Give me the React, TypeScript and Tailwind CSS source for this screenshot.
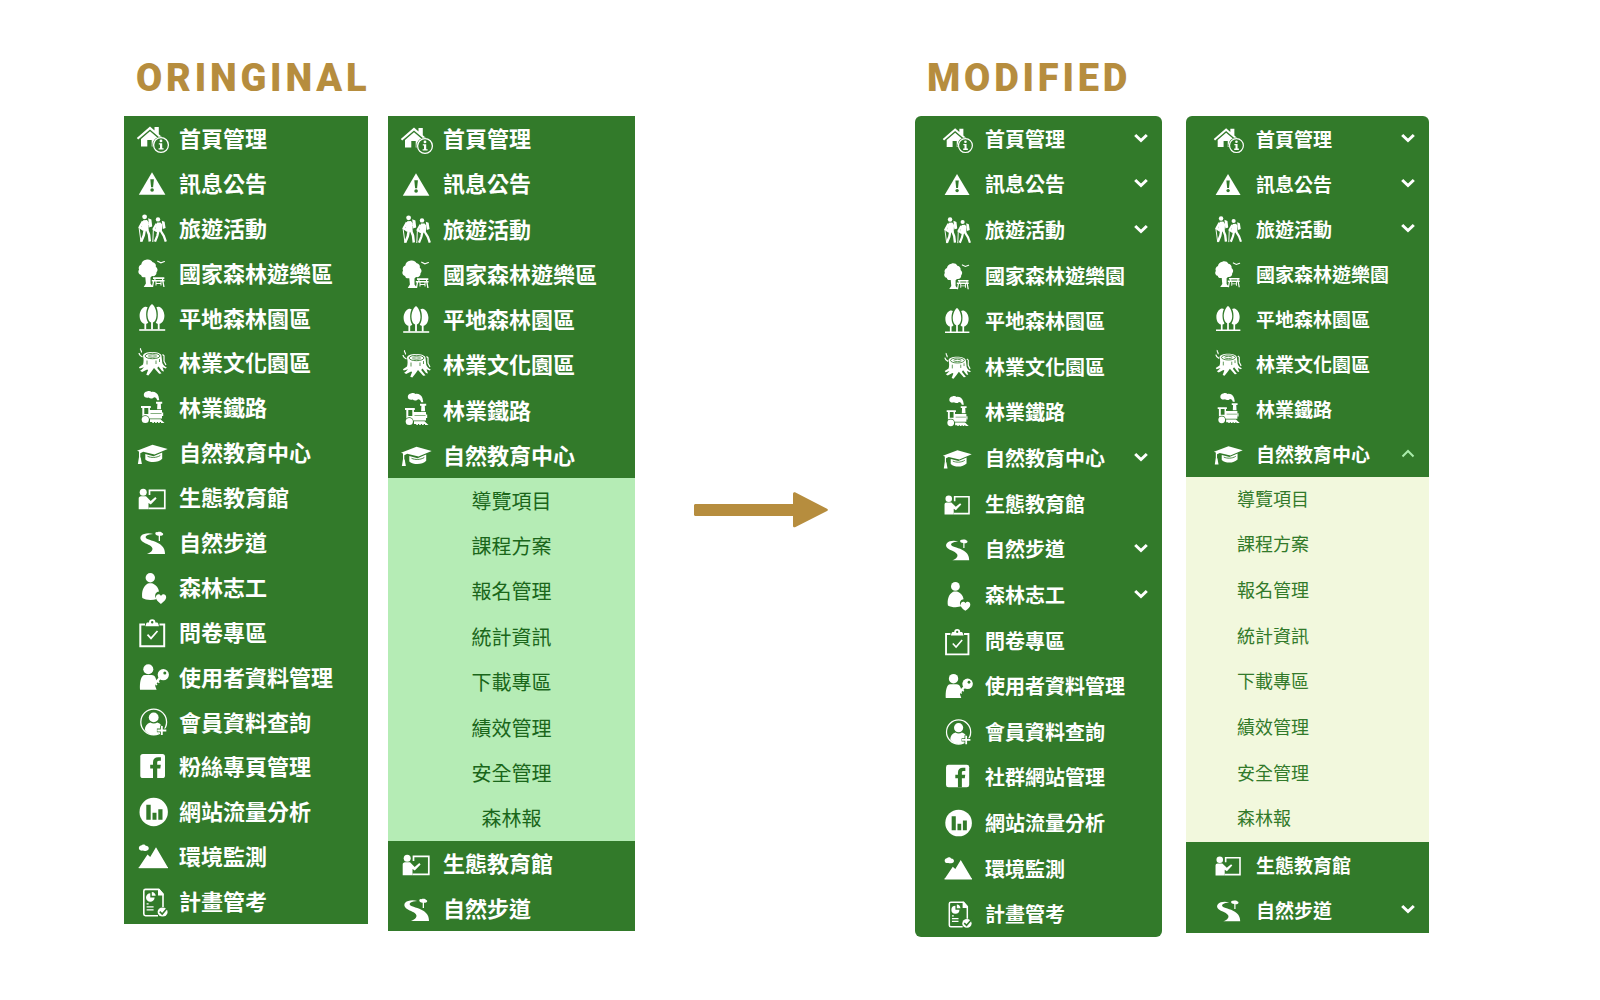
import type { ReactNode } from "react";

type IconName =
  | "home" | "alert" | "hikers" | "park" | "trees" | "stump" | "train" | "cap" | "teach"
  | "trail" | "volunteer" | "survey" | "userKey" | "member" | "facebook" | "stats" | "mountain" | "report";

type Item = { icon: IconName; label: string; more?: "down" | "up" };

const cut = "fill-[#327a2a]";
const cutLine = "fill-none stroke-[#327a2a]";
const line = "fill-none stroke-current";

const drawings: Record<IconName, ReactNode> = {
  home: (
    <>
      <path d="M14 4.5 18.5 8.4V5h4.3v7.2l4.4 3.9-1.4 1.5L14 7.4 2.2 17.6.8 16z" />
      <path d="M14 9.2 23 17v7.5h-7.3V18h-4.4v6.5H5V17z" />
      <circle cx="25" cy="23" r="8.6" className={cut} />
      <circle cx="25" cy="23" r="7.4" className={line} strokeWidth="1.3" />
      <circle cx="25" cy="18.9" r="1.4" />
      <path d="M22.8 21.2h3.4v5h1.4v1.4h-5v-1.4H24v-3.6h-1.2z" />
    </>
  ),
  alert: (
    <>
      <path d="M16 5.3 29.4 27.8H2.8z" />
      <path d="M14.3 12.3h3.6l-.8 8h-2z" className={cut} />
      <circle cx="16.1" cy="23" r="1.8" className={cut} />
    </>
  ),
  hikers: (
    <>
      <circle cx="8.6" cy="4.8" r="2.4" />
      <path d="M7.2 8.2 11 8l1.800 2.400-.3 7.800-5 .6-2-3.800z" />
      <path d="m12.200 6.200 3.200 1.200.8 6.800-3 1.200z" />
      <path d="m7 9.400-3.200 5.800 3.800 2.600M8.800 17.500 7.800 23.200 5.200 29.600M11 17.500l2 5 .8 7" className={line} strokeWidth="2.500" strokeLinejoin="round" />
      <path d="m3 15 2 15M12 12l3.500 2.400" className={line} strokeWidth="1" />
      <circle cx="22" cy="7.400" r="2.200" />
      <path d="m21 10.600 3.600-.2 1.600 2.200-.3 7-4.800.5-1.700-3.600z" />
      <path d="m25.800 8.800 2.800 1 1 6.200-2.800 1z" />
      <path d="m20.600 11.800-3 5.200 3.600 2.400M22.400 19l-1 4.600-2.400 6M24.800 19l3 4.800 2 5.800" className={line} strokeWidth="2.300" strokeLinejoin="round" />
      <path d="m17.400 17-.6 13" className={line} strokeWidth="1" />
    </>
  ),
  park: (
    <>
      <path d="M10 2.800c2.600-.8 5.400 0 6.400 2.300 2.600.5 4 2.600 3.400 4.600 2 1.500 2.300 4 .7 5.600.2 2.800-2 4.400-4.500 3.800l-1.500 1.500v6l2.600 3.300H7.700l2.200-3.300-.6-6.400c-2.500.6-4-.6-4.200-2.300C2.900 17.500 1.500 15 3 12.700c-.9-2.300.2-4.500 2.300-5.200C5.500 5 7.500 3 10 2.800z" />
      <path d="M17 20.300h11.300v1.600H17zM15.800 23h12.700v1.500H15.800zM18.300 21.500h1.200v3h-1.200zM26 21.500h1.200v3H26zM16.800 24.500h1.300l-1 5.500h-1.300zM26.300 24.500h1.300l1 5.500h-1.300zM20 26h5v1h-5zM19.500 24.500h1v4h-1zM24.500 24.500h1v4h-1z" />
      <path d="m21.700 4.200 3.200 1.600 3.500-1.300" className={line} strokeWidth="1.200" strokeLinecap="round" />
    </>
  ),
  trees: (
    <>
      <path d="M16 2c3 2 4.700 7.300 4.500 11.600-.1 3.600-1.700 6.400-3.600 7v7h-1.800v-7c-1.900-.6-3.500-3.400-3.600-7C11.300 9.300 13 4 16 2z" />
      <path d="M11.600 5.300c-1.300 2.600-1.700 6.300-1.300 9.600.3 2.500 1 4.400 2 5.500-.7.900-1.500 1.300-2.100 1.400v5.800H8.400v-5.800c-3-.5-4.800-4-4.800-8.200 0-3.600 2.200-8 5.400-8.800 1-.2 2 0 2.600.5zM20.400 5.300c1.300 2.600 1.700 6.300 1.300 9.600-.3 2.500-1 4.400-2 5.500.7.900 1.500 1.300 2.100 1.400v5.800h1.800v-5.800c3-.5 4.800-4 4.800-8.200 0-3.600-2.200-8-5.400-8.800-1-.2-2 0-2.600.5z" />
      <path d="M3.200 27.200h26v1.600h-26z" />
    </>
  ),
  stump: (
    <>
      <path d="M7 9c0-2.800 4-4 9-4s9.500 1.500 9.500 4l.8 7c1 2.500 2.500 3.500 4.500 4.500l-1 1-3.300-1.300 1.500 4.300-2-.4-3.500-4.600-1.300 1.500 4.300 5.600-2.300.2-5.200-5.800-2.500 3.500-3.200 4-2-.7 1.800-4.800-1-.6-5 2.600-2-1.300 1.500-1 2.400-2.500-4.200 1.300-.9-1.200L7 17.500c.8-2.500.8-5.500 0-8.500z" />
      <ellipse cx="16.500" cy="9" rx="7.400" ry="2.700" className={cutLine} strokeWidth=".9" />
      <ellipse cx="16.500" cy="9" rx="4" ry="1.200" className={cutLine} strokeWidth=".8" />
      <path d="M11 13.500v4M20 13.500v3.500M23.500 12v3" className={cutLine} strokeWidth=".8" />
      <path d="M4.600 1.200c-1 1.800 1.600 2.500.8 4.300M3 6c.2 2 1.500 3 3.500 4M26.500 7.500l1.500 1.200v5.500l2 3.800" className={line} strokeWidth="1.200" />
    </>
  ),
  train: (
    <>
      <path d="M11-.5c1.500-.8 3.500-.6 4.500.4 3-.6 6 1.200 7 4.300l.8 4h-2.200c-.4-2-1.400-3-3-3-1.400 1.600-4 1.600-5.400.4C10 6.400 7.700 5 7.800 2.800 7.800 1 9.300-.4 11-.5z" />
      <path d="M20 9.800h6.200v2h-1.400l.3 5.400h-4l.3-5.400H20z" />
      <path fillRule="evenodd" d="M5 14h9.800v2h-.9v2H26v8.500H6.300V16H5zm3.300 2v6h4v-6z" />
      <path d="M14.500 21.500h11" className={cutLine} strokeWidth=".6" />
      <circle cx="9.300" cy="27.500" r="4.200" className={cut} />
      <circle cx="9.300" cy="27.500" r="3.600" />
      <path d="M14 27.200h10.500l4 3.800H25v-1H23.700v1h-1.600v-1h-1.300v1h-1.600v-1h-1.300v1h-1.600v-1H14z" />
      <path d="M26 20.500h1.200V24H26z" />
    </>
  ),
  cap: (
    <>
      <path d="M16.500 7.700 31.700 12l-13.200 5.600-11.300-2.800-2.900 1.400V21H3v-6.500l-2-.8z" />
      <path d="m9.300 17 8.200 2.200 8.700-3.700v6.300c-3.800 4-12.300 4.600-16.900.6z" />
      <path d="M11.500 19.300c3.600 1.600 8.800 1.700 12.800-.8" className={cutLine} strokeWidth=".9" />
      <path d="M2.900 20.500h1.800l1.200 6.600h-4z" />
    </>
  ),
  teach: (
    <>
      <circle cx="7.200" cy="10.300" r="3.500" />
      <path d="M13.500 13V8.300h15.300v18H12.500" className={line} strokeWidth="1.700" />
      <path d="M5 14.300h5l4.700 4.600 4.600-3.800 1.300 1.500-5.800 6-2.300-1.500v6.200H2.700V16.600c0-1.400.9-2.300 2.300-2.300z" />
    </>
  ),
  trail: (
    <>
      <path d="M17.200 8c-6 .4-8.400 2.200-7.200 4 1.500 2 8.500 2.600 13.300 5.800 4.200 2.700 5.700 6 5.700 10.200H11c4.600-1.700 6.800-4.600 4.700-7-2.200-2.600-7-3.300-9.700-5.700-2-1.800-2.200-4-.6-5.700C7.400 7.700 12 6.500 17.200 8z" />
      <path d="M19.500 8.300c-.7-1.600.7-2.600 2-2.100 1.300-.8 4-.5 4.600.7 1.300.2 1.500 1.800.4 2.400-1.600 1-6 .6-7-1z" />
      <path d="M22.700 9h1.300v6h-1.300z" />
    </>
  ),
  volunteer: (
    <>
      <circle cx="14.300" cy="6.800" r="4.700" />
      <path d="M11.800 12.600c1.500-.6 3.600-.6 5 0 3.500 1.700 5.800 4.400 6.200 7.800-2.800.3-4.400 2.800-3.600 5.500.3.900.8 1.500 1.500 2.200-4.500 1.400-11.300 1.200-14.600-1-.8-5.400.4-11.700 5.500-14.500z" />
      <path d="M24.900 32.900c-2.800-2.200-5-4.200-5-6.600 0-3.200 3.700-4.200 5.100-1.400 1.500-2.800 5.200-1.800 5.200 1.400 0 2.400-2.600 4.400-5.300 6.600z" />
    </>
  ),
  survey: (
    <>
      <path d="M9 8.500H4.300v21.800h23.900V8.500h-4.700" className={line} strokeWidth="2" />
      <path fillRule="evenodd" d="M13 6.400a3.200 3.200 0 0 1 6.400 0h1.200c.8 0 1.400.5 1.600 1.200l.8 2.600H9.400l.8-2.600c.2-.7.8-1.200 1.600-1.200zm3.200-1.300a1.200 1.200 0 1 0 0 2.400 1.200 1.200 0 0 0 0-2.400z" />
      <path d="m11.500 18.700 3.500 3.700 6.500-7.400" className={line} strokeWidth="1.700" />
    </>
  ),
  userKey: (
    <>
      <circle cx="12.300" cy="8.200" r="5" />
      <path d="M8.800 14h6.700c2 0 3.500 1.200 4.200 3.200l.7 2.300-1.200 5.500 1.400 3.800H4c-.4-6.500.6-14.800 4.800-14.800z" />
      <circle cx="27.300" cy="13.700" r="5.600" />
      <circle cx="28.800" cy="12" r="1.500" className={cut} />
      <path d="m24.300 16.500-5.300 6" className={line} strokeWidth="2.600" />
      <path d="m21 19.500 2.300 2.200M19 22l2 2" className={line} strokeWidth="1.500" />
    </>
  ),
  member: (
    <>
      <circle cx="17.700" cy="16" r="12.900" className={line} strokeWidth="1.300" />
      <circle cx="17.700" cy="11.400" r="4.900" />
      <path d="M14.300 16.500c2 1.300 5 1.300 7 0 3.400 1 5.200 3.700 5.500 7-3.500 6.700-13.300 7.500-18 .5.200-3.800 2-6.500 5.500-7.500z" />
      <path d="M25.800 19.500v9.800M20.900 24.400h9.800" className={cutLine} strokeWidth="3.600" />
      <path d="M25.800 20v9M21.300 24.500h9" className={line} strokeWidth="1.900" />
    </>
  ),
  facebook: (
    <>
      <rect x="4.300" y="3" width="24.700" height="24" rx="2.600" />
      <path d="M17 27v-9.600h-2.800v-3.700H17v-2.400c0-3.400 2-5.100 5.200-5.100h2.700v3.500H23c-1.400 0-1.800.7-1.800 1.800v2.200h3.600l-.5 3.700h-3.100V27z" className={cut} />
    </>
  ),
  stats: (
    <>
      <circle cx="17.700" cy="16" r="14.200" />
      <path d="M10.300 8.700h4.400v15h-4.400zM16.500 16.800h4v6.900h-4zM22.300 13.300h4.200v10.400h-4.200z" className={cut} />
    </>
  ),
  mountain: (
    <>
      <path d="m2.700 26.700 8.800-13.200 2.700 2.500L20 6.300l12 20.400z" />
      <path d="M5.200 4.500C6.500 3 9 3.200 9.700 4.800c2.200.2 3.500 1.700 3 3.100-.9 2.300-4.800 2.200-5.800 1.700-2 .3-3.800-.4-4-2-.3-1.700.7-3 2.300-3.100z" />
      <path d="M2.700 26H32v1.200H2.700z" />
    </>
  ),
  report: (
    <>
      <path d="M22 29.700H9.500c-1 0-1.700-.6-1.700-1.600V5c0-1 .7-1.600 1.700-1.600h13.200L27 8v13" className={line} strokeWidth="1.600" />
      <path d="M22 3h1.500l4 5v1.500H22z" />
      <path d="M14.300 7.200v4.300h4.300a4.300 4.300 0 1 1-4.300-4.300z" />
      <path d="M15.800 5.900a4.300 4.300 0 0 1 3.900 3.900h-3.900zM10.600 17.300h2v1.300h-2zM10.600 20.300h7v1.200h-7zM10.600 23.200h7v1.200h-7z" />
      <ellipse cx="26.600" cy="26" rx="5" ry="4.600" />
      <path d="m23.700 25.700 2.500 2.400 5.800-6.800" className={cutLine} strokeWidth="1.600" />
    </>
  ),
};

function Icon({ name, className }: { name: IconName; className: string }) {
  return (
    <svg viewBox="0 0 32 32" aria-hidden="true" className={`shrink-0 overflow-visible fill-current ${className}`}>
      {drawings[name]}
    </svg>
  );
}

function Chevron({ up }: { up: boolean }) {
  return (
    <svg
      viewBox="0 0 14 12"
      aria-hidden="true"
      className={`ml-auto h-3 w-3.5 shrink-0 fill-none ${up ? "stroke-2 stroke-[#a9ecaa]" : "stroke-3 stroke-white"}`}
    >
      <path d={up ? "m1.500 8.500 5.500-5.500 5.500 5.500" : "m1.200 2 5.800 5.500L12.800 2"} />
    </svg>
  );
}

function OriginalRows({ items, className }: { items: Item[]; className: string }) {
  return (
    <ul className={`flex flex-col bg-[#327a2a] text-white ${className}`}>
      {items.map((item) => (
        <li key={item.label} className="flex flex-1">
          <a href="#" className="flex w-full items-center gap-[11px] pl-3 text-[22px] leading-8 font-bold whitespace-nowrap">
            <Icon name={item.icon} className="size-8" />
            <span className="pb-[3px]">{item.label}</span>
          </a>
        </li>
      ))}
    </ul>
  );
}

function ModifiedRows({ items, className }: { items: Item[]; className: string }) {
  const row = "flex w-full items-center gap-[13px] pr-3.5 pl-[27px] text-left leading-7 font-bold whitespace-nowrap";
  return (
    <ul className={`flex flex-col bg-[#327a2a] text-white ${className}`}>
      {items.map((item) => (
        <li key={item.label} className="flex flex-1">
          {item.more ? (
            <button type="button" aria-expanded={item.more === "up"} className={row}>
              <Icon name={item.icon} className="size-[30px]" />
              {item.label}
              <Chevron up={item.more === "up"} />
            </button>
          ) : (
            <a href="#" className={row}>
              <Icon name={item.icon} className="size-[30px]" />
              {item.label}
            </a>
          )}
        </li>
      ))}
    </ul>
  );
}

const subItems = ["導覽項目", "課程方案", "報名管理", "統計資訊", "下載專區", "績效管理", "安全管理", "森林報"];

function SubRows({ className, linkClassName }: { className: string; linkClassName: string }) {
  return (
    <ul className={`flex flex-col ${className}`}>
      {subItems.map((label) => (
        <li key={label} className="flex flex-1">
          <a href="#" className={`flex w-full items-center whitespace-nowrap ${linkClassName}`}>
            {label}
          </a>
        </li>
      ))}
    </ul>
  );
}

const original: Item[] = [
  { icon: "home", label: "首頁管理" },
  { icon: "alert", label: "訊息公告" },
  { icon: "hikers", label: "旅遊活動" },
  { icon: "park", label: "國家森林遊樂區" },
  { icon: "trees", label: "平地森林園區" },
  { icon: "stump", label: "林業文化園區" },
  { icon: "train", label: "林業鐵路" },
  { icon: "cap", label: "自然教育中心" },
  { icon: "teach", label: "生態教育館" },
  { icon: "trail", label: "自然步道" },
  { icon: "volunteer", label: "森林志工" },
  { icon: "survey", label: "問卷專區" },
  { icon: "userKey", label: "使用者資料管理" },
  { icon: "member", label: "會員資料查詢" },
  { icon: "facebook", label: "粉絲專頁管理" },
  { icon: "stats", label: "網站流量分析" },
  { icon: "mountain", label: "環境監測" },
  { icon: "report", label: "計畫管考" },
];

const modified: Item[] = [
  { icon: "home", label: "首頁管理", more: "down" },
  { icon: "alert", label: "訊息公告", more: "down" },
  { icon: "hikers", label: "旅遊活動", more: "down" },
  { icon: "park", label: "國家森林遊樂園" },
  { icon: "trees", label: "平地森林園區" },
  { icon: "stump", label: "林業文化園區" },
  { icon: "train", label: "林業鐵路" },
  { icon: "cap", label: "自然教育中心", more: "down" },
  { icon: "teach", label: "生態教育館" },
  { icon: "trail", label: "自然步道", more: "down" },
  { icon: "volunteer", label: "森林志工", more: "down" },
  { icon: "survey", label: "問卷專區" },
  { icon: "userKey", label: "使用者資料管理" },
  { icon: "member", label: "會員資料查詢" },
  { icon: "facebook", label: "社群網站管理" },
  { icon: "stats", label: "網站流量分析" },
  { icon: "mountain", label: "環境監測" },
  { icon: "report", label: "計畫管考" },
];

const modifiedOpen: Item[] = modified.slice(0, 8).map((item) => (item.icon === "cap" ? { ...item, more: "up" } : item));

function Title({ children }: { children: string }) {
  return (
    <h2 className="pl-3 font-['Roboto',sans-serif] text-[38px] leading-10 font-black tracking-widest text-[#b68d3e]">
      {children}
    </h2>
  );
}

export default function App() {
  return (
    <main
      lang="zh-Hant"
      className="grid min-h-screen grid-cols-[511fr_280fr_514fr] content-start bg-white pt-[58px] pr-[171px] pb-15 pl-31 font-['Noto_Sans_CJK_TC',sans-serif]"
    >
      <section className="flex flex-col gap-[18px]">
        <Title>ORINGINAL</Title>
        <div className="grid grid-cols-[244fr_247fr] items-start gap-5">
          <nav aria-label="Original menu">
            <OriginalRows items={original} className="min-h-[808px]" />
          </nav>
          <nav aria-label="Original menu, opened">
            <OriginalRows items={original.slice(0, 8)} className="min-h-[362px]" />
            <SubRows
              className="min-h-[363px] bg-[#b5ecb5]"
              linkClassName="justify-center text-[20px] leading-7 text-[#1a661a]"
            />
            <OriginalRows items={original.slice(8, 10)} className="min-h-[90px]" />
          </nav>
        </div>
      </section>

      <div className="flex items-center pt-6 pl-[59px]">
        <svg viewBox="0 0 134 36" role="img" aria-label="becomes" className="w-[134px] fill-[#b68d3e]">
          <path d="M1.500 12H99V2c0-1.500 1.300-2 2.500-1.400L133 16.800c1.200.6 1.200 1.700 0 2.300l-31.500 16C100.300 35.700 99 35.300 99 34V24H1.500C.6 24 0 23.400 0 22.500v-9c0-.9.600-1.500 1.500-1.500z" />
        </svg>
      </div>

      <section className="flex flex-col gap-[18px]">
        <Title>MODIFIED</Title>
        <div className="grid grid-cols-[247fr_243fr] items-start gap-6">
          <nav aria-label="Modified menu">
            <ModifiedRows items={modified} className="min-h-[821px] rounded-md text-[20px]" />
          </nav>
          <nav aria-label="Modified menu, opened">
            <ModifiedRows items={modifiedOpen} className="min-h-[361px] rounded-t-md text-[19px]" />
            <SubRows
              className="min-h-[365px] bg-[#f2f8dd]"
              linkClassName="pb-1 pl-[51px] text-[18px] leading-7 text-[#327a2a]"
            />
            <ModifiedRows items={modified.slice(8, 10)} className="min-h-[91px] text-[19px]" />
          </nav>
        </div>
      </section>
    </main>
  );
}
